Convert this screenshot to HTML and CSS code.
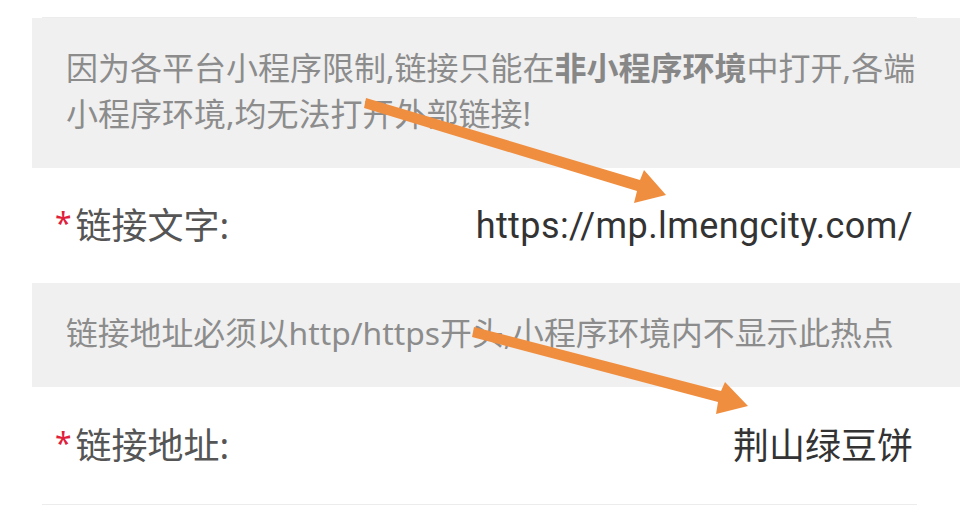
FILE: index.html
```html
<!DOCTYPE html>
<html lang="zh-CN">
<head>
<meta charset="utf-8">
<title>链接设置</title>
<link rel="stylesheet" href="styles.css">
</head>
<body>
<div class="page">
  <div class="top-line"></div>
  <div class="notice notice-tall">
    <p>因为各平台小程序限制,链接只能在<b>非小程序环境</b>中打开,各端小程序环境,均无法打开外部链接!</p>
  </div>
  <div class="row">
    <span class="label"><span class="req">*</span>链接文字:</span>
    <span class="value latin">https://mp.lmengcity.com/</span>
  </div>
  <div class="notice notice-short">
    <p>链接地址必须以http/https开头,小程序环境内不显示此热点</p>
  </div>
  <div class="row row-last">
    <span class="label"><span class="req">*</span>链接地址:</span>
    <span class="value">荆山绿豆饼</span>
  </div>

  <svg class="arrows" width="960" height="523" viewBox="0 0 960 523">
    <polygon class="arrow" points="366,98 640,180 644,170 666,195 634,203 637,191 364,108"/>
    <polygon class="arrow" points="474,327 721,391 725,382 748,406 716,414 718,402 472,337"/>
  </svg>
</div>
</body>
</html>
```

FILE: styles.css
```css
html, body {
  margin: 0;
  padding: 0;
  background: #ffffff;
}

body {
  width: 960px;
  height: 523px;
  overflow: hidden;
  font-family: "Noto Sans", "Noto Sans CJK SC", sans-serif;
}

.page {
  position: relative;
  width: 960px;
  height: 523px;
  padding-top: 17px;
  box-sizing: border-box;
}

.top-line {
  height: 1px;
  margin: 0 43px 0 42px;
  background: #ececec;
}

.notice {
  margin-left: 32px;
  background: #f0f0f0;
  padding: 27px 40px 31px 34px;
  color: #8c8c8c;
  font-size: 32px;
  line-height: 46px;
}

.notice p {
  margin: 0;
}

.notice-short {
  font-size: 31.8px;
}

.notice b {
  color: #878787;
  font-weight: 700;
}

.row {
  display: flex;
  align-items: center;
  justify-content: space-between;
  height: 115px;
  margin: 0 43px 0 42px;
  padding: 0 4px 0 13px;
  box-sizing: border-box;
}

.row-last {
  height: 118px;
  border-bottom: 1px solid #ececec;
}

.label {
  display: flex;
  align-items: center;
  color: #555555;
  font-size: 36px;
  line-height: 46px;
}

.req {
  color: #e0203a;
  font-size: 30px;
  margin-right: 4px;
  position: relative;
  top: -3px;
}

.value {
  color: #333333;
  font-size: 36px;
  line-height: 46px;
}

.latin {
  font-family: Roboto, "Noto Sans CJK SC", sans-serif;
  letter-spacing: 0.4px;
}

.arrows {
  position: absolute;
  left: 0;
  top: 0;
  pointer-events: none;
}

.arrow {
  fill: #f08e40;
}
```
